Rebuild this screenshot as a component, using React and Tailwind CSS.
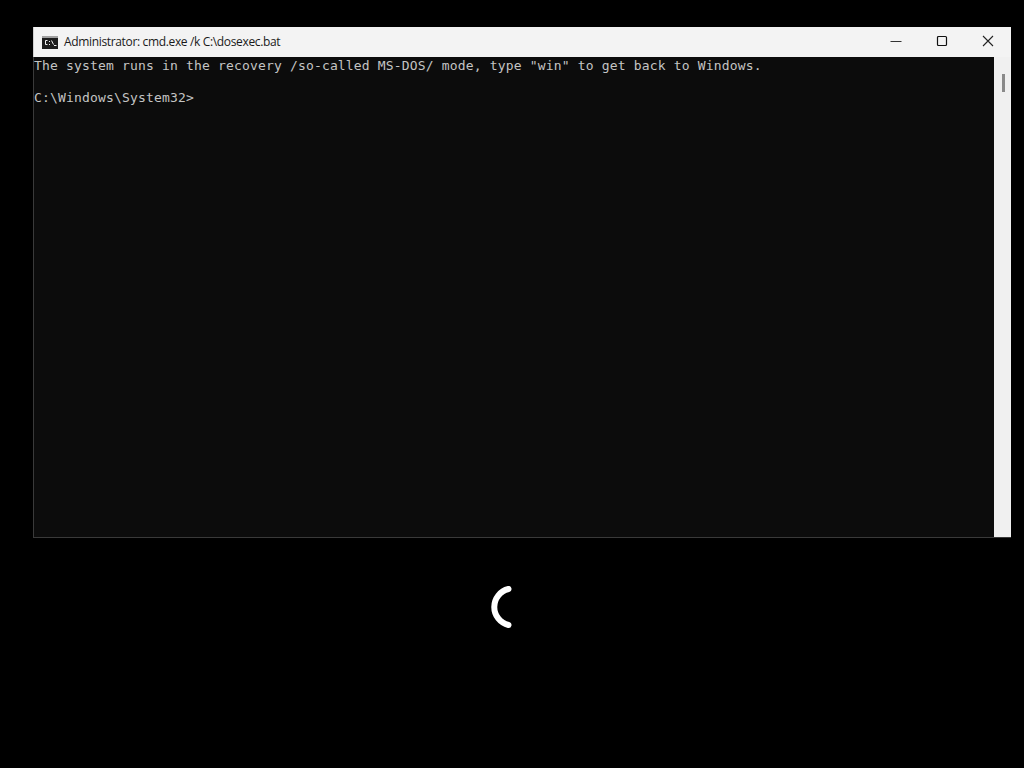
export default function App() {
  const mono = "font-['DejaVu_Sans_Mono','Liberation_Mono',monospace] text-[13px] leading-[16px] tracking-[0.17px] text-[#c4c4c4] whitespace-pre";
  return (
    <div className="w-[1024px] h-[768px] bg-black overflow-hidden flex flex-col pt-[27px] pl-[33px]">
      <div className="w-[978px] h-[511px] flex flex-col bg-[#f0f0f0] border-b border-[#3a3a3a]">
        <div className="h-[30px] shrink-0 flex items-center bg-[#f3f3f3] border-l border-[#d0d0d0]">
          <svg className="ml-[8px] shrink-0" width="16" height="13" viewBox="0 0 16 13">
            <rect x="0" y="0" width="16" height="13" fill="#1c1c1c" />
            <rect x="0" y="0" width="16" height="2" fill="#a0a0a0" />
            <path d="M5.5 4.5H3.5V8.5H5.5" stroke="#f0f0f0" strokeWidth="1" fill="none" />
            <rect x="7" y="5" width="1" height="1" fill="#f0f0f0" />
            <rect x="7" y="8" width="1" height="1" fill="#f0f0f0" />
            <path d="M9.5 4.5L11.5 8.5M12 9.5H14.5" stroke="#f0f0f0" strokeWidth="1" fill="none" />
          </svg>
          <span className="ml-[6px] font-['Open_Sans','Noto_Sans',sans-serif] text-[12px] tracking-[-0.345px] text-[#1a1a1a] whitespace-pre">Administrator: cmd.exe /k C:\dosexec.bat</span>
          <div className="ml-auto flex items-center h-full pb-[2px]">
            <svg className="mr-[34px]" width="12" height="12" viewBox="0 0 12 12"><path d="M0.5 6.5H11.5" stroke="#333" strokeWidth="1" /></svg>
            <svg className="mr-[34px]" width="12" height="12" viewBox="0 0 12 12"><rect x="1.5" y="1.5" width="9" height="9" rx="1" fill="none" stroke="#111" strokeWidth="1.2" /></svg>
            <svg className="mr-[17px]" width="12" height="12" viewBox="0 0 12 12"><path d="M1 1L11 11M11 1L1 11" stroke="#222" strokeWidth="1.1" /></svg>
          </div>
        </div>
        <div className="flex-1 flex min-h-0">
          <div className="flex-1 bg-[#0c0c0c] border-l border-[#3a3a3a] pt-[1px] pl-0">
            <div className={mono}>The system runs in the recovery /so-called MS-DOS/ mode, type "win" to get back to Windows.</div>
            <div className={mono}> </div>
            <div className={mono}>C:\Windows\System32&gt;</div>
          </div>
          <div className="w-[17px] shrink-0 flex justify-center pt-[17px] bg-[#f0f0f0] pl-[1px]">
            <div className="w-[3px] h-[18px] bg-[#8a8a8a]" />
          </div>
        </div>
      </div>
      <div className="w-[978px] flex justify-start mt-[48px] pl-[455px]">
        <svg width="24" height="44" viewBox="0 0 24 44">
          <path d="M20.5 3 A 18.5 18.5 0 0 0 20.5 39" fill="none" stroke="#ffffff" strokeWidth="6" strokeLinecap="round" />
        </svg>
      </div>
    </div>
  );
}
